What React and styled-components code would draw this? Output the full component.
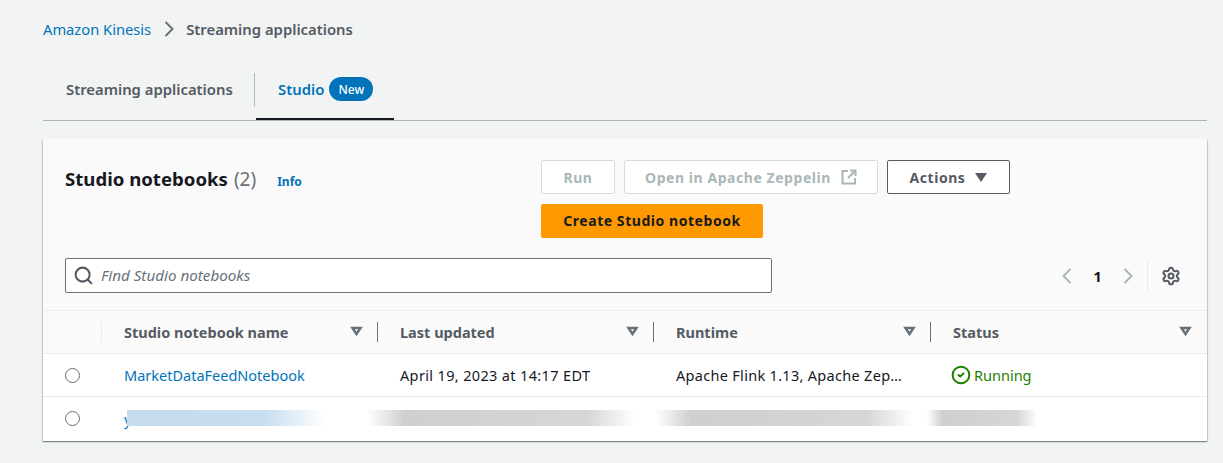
import React from 'react'
import styled, { createGlobalStyle } from 'styled-components'
import { Search, Settings, CircleCheck } from 'lucide-react'

const GlobalStyle = createGlobalStyle`
  html, body {
    margin: 0;
    background: #f2f3f3;
    font-family: "Noto Sans", "Open Sans", sans-serif;
    font-size: 14.5px;
    color: #16191f;
  }
  * { box-sizing: border-box; }
`

const Page = styled.div`
  width: 1223px;
  height: 463px;
  padding: 18px 16px 0 43px;
  overflow: hidden;
`

const Breadcrumbs = styled.nav`
  display: flex;
  align-items: center;
  height: 22px;
`

const CrumbLink = styled.a`
  color: #0073bb;
  font-size: 14.7px;
`

const CrumbCurrent = styled.span`
  color: #545b64;
  font-size: 14.85px;
  font-weight: 600;
`

const Chevron = styled.svg`
  flex: none;
  width: 10px;
  height: 16px;
  fill: none;
  stroke: ${p => p.$color};
  stroke-width: 2;
`

const CrumbSep = styled.span`
  display: flex;
  margin: 0 12px 0 13px;
`

const Tabs = styled.div`
  display: flex;
  height: 50px;
  margin-top: 31px;
  border-bottom: 1px solid #aab7b8;
`

const Tab = styled.div`
  display: flex;
  flex: none;
  align-items: center;
  gap: 5px;
  width: ${p => p.$width}px;
  height: 49px;
  padding: ${p => (p.$active ? '0 0 11px 22px' : '0 0 13px 23px')};
  font-size: 14.85px;
  font-weight: 600;
  color: ${p => (p.$active ? '#0073bb' : '#545b64')};
  border-bottom: ${p => (p.$active ? '2px solid #16191f' : 'none')};
`

const TabDivider = styled.div`
  width: 1px;
  height: 33px;
  margin: 2px 1px 0 0;
  background: #aab7b8;
`

const NewBadge = styled.span`
  display: inline-flex;
  align-items: center;
  justify-content: center;
  width: 44px;
  height: 24px;
  border-radius: 12px;
  background: #0073bb;
  color: #fff;
  font-size: 12px;
  font-weight: 500;
`

const Card = styled.section`
  margin-top: 18px;
  background: #fff;
  box-shadow: 0 1px 1px 0 rgba(0, 28, 36, 0.3), 1px 1px 1px 0 rgba(0, 28, 36, 0.15), -1px 1px 1px 0 rgba(0, 28, 36, 0.15);
`

const CardHeader = styled.div`
  background: #fafafa;
  padding: 21px 22px 17px;
`

const TopRow = styled.div`
  display: flex;
`

const TitleBlock = styled.div`
  display: flex;
  align-items: baseline;
  width: 476px;
  padding-top: 5px;
`

const Title = styled.h2`
  margin: 0;
  font-size: 18.6px;
  line-height: 27px;
  font-weight: 700;
`

const Count = styled.span`
  margin-left: 6px;
  font-size: 19px;
  font-weight: 400;
  color: #687078;
`

const InfoLink = styled.a`
  margin-left: 21px;
  font-size: 12px;
  font-weight: 700;
  color: #0073bb;
`

const Actions = styled.div`
  display: flex;
  flex-wrap: wrap;
  align-content: flex-start;
  gap: 10px 9px;
  width: 480px;
`

const Button = styled.button`
  display: inline-flex;
  align-items: center;
  justify-content: center;
  gap: ${p => p.$gap || 10}px;
  width: ${p => p.$width}px;
  height: 34px;
  padding: 0 0 ${p => (p.$primary ? 2 : 0)}px;
  border-radius: 2px;
  font-family: inherit;
  font-size: 14px;
  font-weight: 700;
  letter-spacing: 0.55px;
  background: ${p => (p.$primary ? '#ff9900' : '#fff')};
  border: 1px solid ${p => (p.$primary ? '#ff9900' : p.disabled ? '#d5dbdb' : '#545b64')};
  color: ${p => (p.$primary ? '#16191f' : p.disabled ? '#aab7b8' : '#545b64')};
`

const Caret = styled.svg`
  width: 12px;
  height: 9px;
  fill: currentColor;
`

const OpenIcon = styled.svg`
  width: 16px;
  height: 16px;
  fill: none;
  stroke: currentColor;
  stroke-width: 2;
`

const SearchRow = styled.div`
  display: flex;
  align-items: center;
  justify-content: space-between;
  margin-top: 20px;
`

const SearchBox = styled.div`
  display: flex;
  align-items: center;
  width: 707px;
  height: 35px;
  padding-left: 7px;
  gap: 7px;
  background: #fff;
  border: 1px solid #687078;
  border-radius: 2px;
  color: #545b64;
`

const Placeholder = styled.span`
  padding-bottom: 2px;
  font-size: 15.2px;
  font-style: italic;
  color: #687078;
`

const Pager = styled.div`
  display: flex;
  align-items: center;
  height: 32px;
  margin-right: 4px;
`

const PageNum = styled.span`
  width: 51px;
  text-align: center;
  font-size: 15px;
  font-weight: 700;
`

const PagerDivider = styled.span`
  width: 1px;
  height: 32px;
  margin: 0 13px 0 14px;
  background: #eaeded;
`

const Gear = styled.span`
  display: flex;
  color: #545b64;
`

const Grid = styled.div`
  display: grid;
  grid-template-columns: 59px 276px 276px 277px 276px;
  align-items: center;
  height: 43px;
  background: ${p => (p.$head ? '#fafafa' : '#fff')};
  border-top: 1px solid #eaeded;
`

const HeadCell = styled.div`
  display: flex;
  align-items: center;
  justify-content: space-between;
  height: 100%;
  padding: 0 15px 0 22px;
  font-weight: 700;
  color: #545b64;
  position: relative;
  &::before {
    content: '';
    position: absolute;
    left: -1px;
    top: 11px;
    bottom: 11px;
    width: 1px;
    background: ${p => p.$sep};
  }
`

const SortCaret = styled.svg`
  width: 13px;
  height: 10px;
  margin-top: -3px;
  fill: none;
  stroke: #687078;
  stroke-width: 2.5;
`

const Cell = styled.div`
  padding-left: 22px;
  white-space: nowrap;
  letter-spacing: ${p => p.$spacing || 0}px;
`

const RadioCell = styled.div`
  flex: none;
  padding-left: 22px;
  display: flex;
`

const Radio = styled.span`
  width: 15px;
  height: 15px;
  border-radius: 50%;
  border: 1px solid #687078;
  background: #fff;
`

const RowLink = styled.a`
  color: #0073bb;
`

const StatusOk = styled.span`
  display: flex;
  align-items: center;
  gap: 3px;
  margin-left: -2px;
  color: #1d8102;
`

const RedactedRow = styled.div`
  display: flex;
  align-items: center;
  height: 45px;
  padding-bottom: 1px;
  border-top: 1px solid #eaeded;
  background: #fff;
`

const LinkStub = styled.a`
  flex: none;
  width: 3px;
  margin-left: 44px;
  color: #0073bb;
`

// covers the blurred out part of the second row
const Smudge = styled.div`
  position: relative;
  flex: none;
  height: 16px;
  margin-top: -1px;
  width: ${p => p.$width}px;
  margin-left: ${p => p.$left}px;
  background: linear-gradient(90deg, ${p => p.$stops});
`

const GRAY_STOPS = 'rgba(255, 255, 255, 0), #cfcfcf 14%, #d6d6d6 82%, rgba(255, 255, 255, 0)'
const BLUE_STOPS = '#c5dcee, #c8deef 70%, rgba(255, 255, 255, 0)'

const columns = [
  { label: 'Last updated', sep: '#687078' },
  { label: 'Runtime', sep: '#687078' },
  { label: 'Status', sep: '#687078' },
]

const SortIcon = () => (
  <SortCaret viewBox="0 0 13 10">
    <path d="M2.5 2h8L6.5 8z" />
  </SortCaret>
)

const ChevronIcon = ({ dir = 'right', color }) => (
  <Chevron viewBox="0 0 10 16" $color={color}>
    <path d={dir === 'right' ? 'M1.5 1l7 7-7 7' : 'M8.5 1l-7 7 7 7'} />
  </Chevron>
)

export default function App() {
  return (
    <Page>
      <GlobalStyle />
      <Breadcrumbs>
        <CrumbLink>Amazon Kinesis</CrumbLink>
        <CrumbSep><ChevronIcon color="#687078" /></CrumbSep>
        <CrumbCurrent>Streaming applications</CrumbCurrent>
      </Breadcrumbs>

      <Tabs>
        <Tab $width={211}>Streaming applications</Tab>
        <TabDivider />
        <Tab $active $width={138}>Studio<NewBadge>New</NewBadge></Tab>
      </Tabs>

      <Card>
        <CardHeader>
          <TopRow>
            <TitleBlock>
              <Title>Studio notebooks</Title>
              <Count>(2)</Count>
              <InfoLink>Info</InfoLink>
            </TitleBlock>
            <Actions>
              <Button disabled $width={74}>Run</Button>
              <Button disabled $width={254}>
                Open in Apache Zeppelin
                <OpenIcon viewBox="0 0 16 16">
                  <path d="M7 2H1.5v12.5H14V9" />
                  <path d="M9 1.5h5.5V7M14.5 1.5L7 9" />
                </OpenIcon>
              </Button>
              <Button $width={123} $gap={10}>
                Actions
                <Caret viewBox="0 0 12 9"><path d="M0 0h12L6 9z" /></Caret>
              </Button>
              <Button $primary $width={222}>Create Studio notebook</Button>
            </Actions>
          </TopRow>
          <SearchRow>
            <SearchBox>
              <Search size={21} strokeWidth={2.3} />
              <Placeholder>Find Studio notebooks</Placeholder>
            </SearchBox>
            <Pager>
              <ChevronIcon dir="left" color="#aab7b8" />
              <PageNum>1</PageNum>
              <ChevronIcon color="#aab7b8" />
              <PagerDivider />
              <Gear><Settings size={20} strokeWidth={2.4} /></Gear>
            </Pager>
          </SearchRow>
        </CardHeader>

        <Grid $head>
          <div />
          <HeadCell $sep="#eaeded">Studio notebook name<SortIcon /></HeadCell>
          {columns.map(col => (
            <HeadCell key={col.label} $sep={col.sep}>{col.label}<SortIcon /></HeadCell>
          ))}
        </Grid>

        <Grid>
          <RadioCell><Radio /></RadioCell>
          <Cell><RowLink>MarketDataFeedNotebook</RowLink></Cell>
          <Cell $spacing={0.35}>April 19, 2023 at 14:17 EDT</Cell>
          <Cell $spacing={0.3}>Apache Flink 1.13, Apache Zep…</Cell>
          <Cell>
            <StatusOk><CircleCheck size={20} strokeWidth={2.4} />Running</StatusOk>
          </Cell>
        </Grid>

        <RedactedRow>
          <RadioCell><Radio /></RadioCell>
          <LinkStub>y</LinkStub>
          <Smudge $left={0} $width={198} $stops={BLUE_STOPS} />
          <Smudge $left={42} $width={268} $stops={GRAY_STOPS} />
          <Smudge $left={20} $width={258} $stops={GRAY_STOPS} />
          <Smudge $left={14} $width={110} $stops={GRAY_STOPS} />
        </RedactedRow>
      </Card>
    </Page>
  )
}
